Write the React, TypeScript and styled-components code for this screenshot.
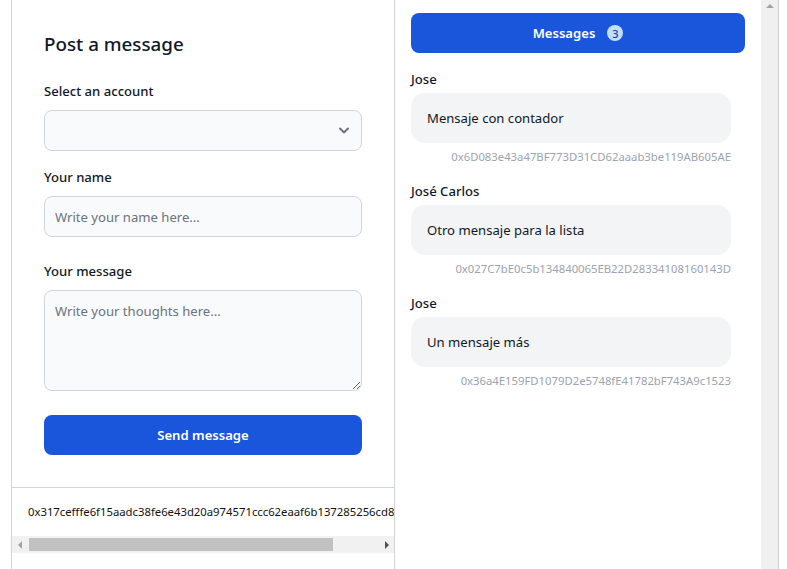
import React from 'react';
import styled, { createGlobalStyle } from 'styled-components';

const GlobalStyle = createGlobalStyle`
  html, body {
    margin: 0;
    padding: 0;
    background: #ffffff;
    overflow: hidden;
  }
  body {
    font-family: "Noto Sans", "Open Sans", sans-serif;
    color: #111827;
  }
  * { box-sizing: border-box; }
`;

const messages = [
  { author: 'Jose', text: 'Mensaje con contador', address: '0x6D083e43a47BF773D31CD62aaab3be119AB605AE' },
  { author: 'José Carlos', text: 'Otro mensaje para la lista', address: '0x027C7bE0c5b134840065EB22D28334108160143D' },
  { author: 'Jose', text: 'Un mensaje más', address: '0x36a4E159FD1079D2e5748fE41782bF743A9c1523' },
];

const Page = styled.main`
  display: flex;
  align-items: stretch;
  height: 100vh;
  margin-left: 11px;
`;

const FormPanel = styled.section`
  width: 384px;
  border-left: 1px solid #d1d5db;
  border-right: 1px solid #d1d5db;
  display: flex;
  flex-direction: column;
`;

const Form = styled.form`
  padding: 30px 32px 32px;
  display: flex;
  flex-direction: column;
`;

const Title = styled.h2`
  margin: 0 0 23px;
  font-size: 18.8px;
  line-height: 28px;
  font-weight: 500;
  color: #111827;
`;

const Field = styled.div<{ $gap: number }>`
  display: flex;
  flex-direction: column;
  margin-bottom: ${p => p.$gap}px;
`;

const Label = styled.label`
  display: block;
  font-size: 13.1px;
  line-height: 20px;
  font-weight: 500;
  color: #111827;
  margin-bottom: 9px;
`;

const fieldBase = `
  width: 100%;
  background: #f9fafb;
  border: 1px solid #d1d5db;
  border-radius: 8px;
  font-family: inherit;
  font-size: 13.1px;
  color: #111827;
  outline: none;
  &::placeholder { color: #6b7280; }
`;

const SelectWrap = styled.div`
  position: relative;
`;

const Select = styled.select`
  ${fieldBase}
  height: 41px;
  padding: 0 10px;
  appearance: none;
`;

const Chevron = styled.svg`
  position: absolute;
  right: 12px;
  top: 16px;
  width: 12px;
  height: 9px;
  pointer-events: none;
`;

const Input = styled.input`
  ${fieldBase}
  height: 41px;
  padding: 0 10px;
`;

const TextArea = styled.textarea`
  ${fieldBase}
  height: 101px;
  padding: 10px;
  line-height: 20px;
  resize: vertical;
  display: block;
`;

const PrimaryButton = styled.button`
  height: 40px;
  width: 100%;
  border: none;
  border-radius: 8px;
  background: #1a56db;
  color: #ffffff;
  font-family: inherit;
  font-size: 13.1px;
  font-weight: 600;
  display: flex;
  align-items: center;
  justify-content: center;
  gap: 12px;
  cursor: pointer;
`;

const HashFooter = styled.div`
  border-top: 1px solid #d1d5db;
  display: flex;
  flex-direction: column;
`;

const HashText = styled.div`
  overflow: hidden;
  white-space: nowrap;
  padding: 16px;
  font-size: 11.3px;
  line-height: 16px;
  color: #111111;
`;

const HScrollBar = styled.div`
  height: 17px;
  display: flex;
  background: #f1f1f1;
`;

const ScrollButton = styled.div<{ $pad?: string }>`
  width: 17px;
  height: 17px;
  flex: none;
  display: flex;
  align-items: center;
  justify-content: center;
  padding: ${p => p.$pad || '0'};
`;

const HTrack = styled.div`
  flex: 1;
  display: flex;
  align-items: center;
`;

const HThumb = styled.div`
  width: 304px;
  height: 13px;
  background: #c1c1c1;
`;

const Arrow = styled.span<{ $dir: 'up' | 'left' | 'right'; $color: string }>`
  width: 0;
  height: 0;
  border-style: solid;
  border-color: transparent;
  ${p => p.$dir === 'up' && `
    border-width: 0 4px 4px 4px;
    border-bottom-color: ${p.$color};
  `}
  ${p => p.$dir === 'left' && `
    border-width: 4px 4px 4px 0;
    border-right-color: ${p.$color};
  `}
  ${p => p.$dir === 'right' && `
    border-width: 4px 0 4px 4px;
    border-left-color: ${p.$color};
  `}
`;

const MessagesColumn = styled.section`
  width: 384px;
  display: flex;
  border-right: 1px solid #cfcfcf;
`;

const MessagesPanel = styled.div`
  flex: 1;
  padding: 13px 16px 16px;
`;

const VScrollBar = styled.div`
  width: 17px;
  flex: none;
  background: #f0f0f0;
`;

const Badge = styled.span`
  width: 16px;
  height: 16px;
  border-radius: 50%;
  background: #c3ddfd;
  color: #1e429f;
  font-size: 11px;
  font-weight: 500;
  display: inline-flex;
  align-items: center;
  justify-content: center;
`;

const MessageList = styled.ul`
  list-style: none;
  margin: 16px 0 0;
  padding: 0;
`;

const MessageItem = styled.li`
  margin-bottom: 16px;
  width: calc(100% - 14px);
`;

const Author = styled.div`
  font-size: 13.1px;
  line-height: 20px;
  font-weight: 500;
  color: #111827;
`;

const Bubble = styled.div`
  margin-top: 4px;
  background: #f3f4f6;
  border-radius: 14px;
  padding: 15px 16px;
  font-size: 13.1px;
  line-height: 20px;
  color: #111827;
`;

const Address = styled.div`
  margin-top: 6px;
  text-align: right;
  font-size: 11.3px;
  line-height: 16px;
  color: #9ca3af;
`;

export default function App() {
  return (
    <>
      <GlobalStyle />
      <Page>
        <FormPanel>
          <Form onSubmit={e => e.preventDefault()}>
            <Title>Post a message</Title>
            <Field $gap={16}>
              <Label htmlFor="account">Select an account</Label>
              <SelectWrap>
                <Select id="account" defaultValue="">
                  <option value="" />
                </Select>
                <Chevron viewBox="0 0 12 9" fill="none">
                  <path d="M2 2.5l4 4 4-4" stroke="#6b7280" strokeWidth="2" strokeLinecap="round" strokeLinejoin="round" />
                </Chevron>
              </SelectWrap>
            </Field>
            <Field $gap={24}>
              <Label htmlFor="name">Your name</Label>
              <Input id="name" placeholder="Write your name here..." />
            </Field>
            <Field $gap={24}>
              <Label htmlFor="message">Your message</Label>
              <TextArea id="message" placeholder="Write your thoughts here..." />
            </Field>
            <PrimaryButton type="submit">Send message</PrimaryButton>
          </Form>
          <HashFooter>
            <HashText>0x317cefffe6f15aadc38fe6e43d20a974571ccc62eaaf6b137285256cd84e0b2</HashText>
            <HScrollBar>
              <ScrollButton $pad="0 2px 0 0">
                <Arrow $dir="left" $color="#a3a3a3" />
              </ScrollButton>
              <HTrack>
                <HThumb />
              </HTrack>
              <ScrollButton $pad="0 0 0 2px">
                <Arrow $dir="right" $color="#505050" />
              </ScrollButton>
            </HScrollBar>
          </HashFooter>
        </FormPanel>
        <MessagesColumn>
          <MessagesPanel>
            <PrimaryButton type="button">
              Messages <Badge>3</Badge>
            </PrimaryButton>
            <MessageList>
              {messages.map((m, i) => (
                <MessageItem key={i}>
                  <Author>{m.author}</Author>
                  <Bubble>{m.text}</Bubble>
                  <Address>{m.address}</Address>
                </MessageItem>
              ))}
            </MessageList>
          </MessagesPanel>
          <VScrollBar>
            <ScrollButton $pad="0 0 6px 0">
              <Arrow $dir="up" $color="#a3a3a3" />
            </ScrollButton>
          </VScrollBar>
        </MessagesColumn>
      </Page>
    </>
  );
}
